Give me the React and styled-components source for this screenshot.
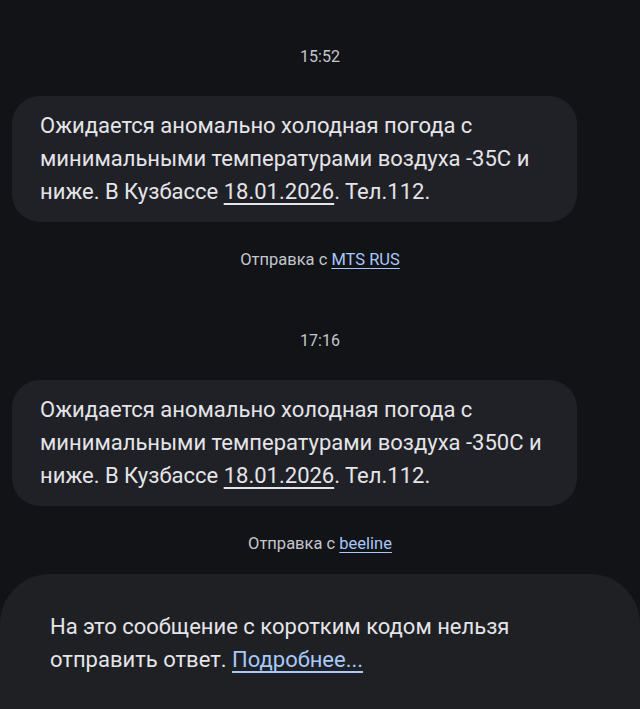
import styled, { createGlobalStyle } from "styled-components";

const GlobalStyle = createGlobalStyle`
  html, body {
    margin: 0;
    background: #121317;
  }
  body {
    font-family: Roboto, "Noto Sans", "Liberation Sans", sans-serif;
    -webkit-font-smoothing: antialiased;
  }
`;

const messages = [
  { time: "15:52", temp: "-35C", sender: "MTS RUS" },
  { time: "17:16", temp: "-350C", sender: "beeline" },
];

function App() {
  return (
    <Screen>
      <GlobalStyle />
      <Thread>
        {messages.map((m, i) => (
          <Group key={i}>
            <TimeLabel>{m.time}</TimeLabel>
            <Bubble>
              Ожидается аномально холодная погода с минимальными температурами воздуха {m.temp} и ниже. В Кузбассе <DateLink>18.01.2026</DateLink>. Тел.112.
            </Bubble>
            <Sender>
              Отправка с <SenderLink>{m.sender}</SenderLink>
            </Sender>
          </Group>
        ))}
      </Thread>
      <Footer>
        На это сообщение с коротким кодом нельзя отправить ответ. <MoreLink>Подробнее...</MoreLink>
      </Footer>
    </Screen>
  );
}

const Screen = styled.div`
  min-height: 709px;
  display: flex;
  flex-direction: column;
  overflow: hidden;
`;

const Thread = styled.div`
  padding-top: 47px;
  display: flex;
  flex-direction: column;
  gap: 61px;
`;

const Group = styled.div`
  display: flex;
  flex-direction: column;
`;

const TimeLabel = styled.div`
  text-align: center;
  font-size: 16px;
  line-height: 20px;
  color: #c4c6cc;
  margin-bottom: 29px;
`;

const Bubble = styled.div`
  margin: 0 63px 0 12px;
  padding: 13px 28px 14px;
  background: #202126;
  border-radius: 28px;
  color: #e4e4e9;
  font-size: 22px;
  line-height: 33px;
`;

const DateLink = styled.span`
  text-decoration: underline;
  text-underline-offset: 4px;
  text-decoration-thickness: 1.5px;
`;

const Sender = styled.div`
  margin-top: 28px;
  text-align: center;
  font-size: 16.5px;
  line-height: 20px;
  color: #c4c6cc;
`;

const SenderLink = styled.span`
  color: #a8c7fa;
  text-decoration: underline;
  text-underline-offset: 3px;
`;

const Footer = styled.div`
  margin-top: 20px;
  flex: 1;
  background: #1f2024;
  border-radius: 50px 50px 0 0;
  padding: 36px 110px 40px 50px;
  color: #e4e4e9;
  font-size: 22px;
  line-height: 33px;
`;

const MoreLink = styled.span`
  color: #a8c7fa;
  text-decoration: underline;
  text-underline-offset: 4px;
`;

export default App;
